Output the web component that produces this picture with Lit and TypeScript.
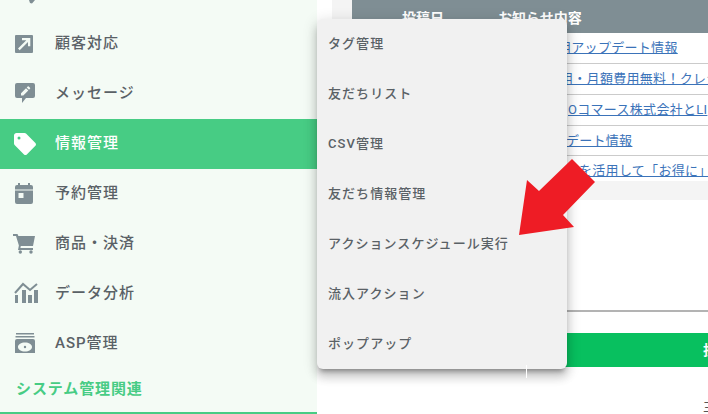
import { LitElement, html, css, svg } from "lit";
import { customElement } from "lit/decorators.js";

const icons: Record<string, unknown> = {
  bubble: svg`<path d="M10 10h12v8l-3 3.500-2-.5-1-3h-6z"/>`,
  open: svg`<path fill-rule="evenodd" d="M3 3h16a1 1 0 0 1 1 1v16a1 1 0 0 1-1 1H3a1 1 0 0 1-1-1V4a1 1 0 0 1 1-1zm6 3v2.300h4.300L5 16.500 6.700 18.200 15 10v4.300h2.300V6z"/>`,
  message: svg`<path fill-rule="evenodd" d="M4 1h16a2 2 0 0 1 2 2v11a2 2 0 0 1-2 2h-7l-4 5v-5H4a2 2 0 0 1-2-2V3a2 2 0 0 1 2-2zm4 12.500h2.300l5-5-2.300-2.300-5 5zm8-5.700 1-1a.7.7 0 0 0 0-1l-1.300-1.300a.7.7 0 0 0-1 0l-1 1z"/>`,
  tag: svg`<path fill-rule="evenodd" d="M3.500 1h8c.6 0 1.100.2 1.500.6l9.400 9.400c.8.8.8 2 0 2.800l-8.600 8.600c-.8.8-2 .8-2.800 0L1.600 13c-.4-.4-.6-.9-.6-1.500v-8C1 2.100 2.100 1 3.500 1zM6 4.500A1.500 1.500 0 1 0 6 7.500 1.500 1.500 0 0 0 6 4.500z"/>`,
  calendar: svg`<path fill-rule="evenodd" d="M5 1h2v2h8V1h2v2h1a2 2 0 0 1 2 2v15a2 2 0 0 1-2 2H4a2 2 0 0 1-2-2V5a2 2 0 0 1 2-2h1zM2 7.500v1h18v-1zM5.500 11v5h5v-5z"/>`,
  cart: svg`<path d="M0 2h4.500l.9 2H22l-2 10H7.800l-.4 2H20v2H5l.9-4.500L3 4H0z"/><circle cx="7.300" cy="20" r="1.700"/><circle cx="18" cy="20" r="1.700"/>`,
  chart: svg`<path d="M2 13h3v8H2zM9 8h4v13H9zM15 13h4v8h-4zM21 8h4v13h-4z"/><path d="M2 11 10 2l7 6 7-6" fill="none" stroke="#7f8e94" stroke-width="2"/>`,
  asp: svg`<path fill-rule="evenodd" d="M3 1h18v1.500H3zM2.500 4h19v1.500h-19zM4 7h16a2 2 0 0 1 2 2v12H2V9a2 2 0 0 1 2-2zm8 3.500c-3.900 0-7 2-7 4.500s3.100 4.500 7 4.500 7-2 7-4.500-3.100-4.500-7-4.500zm0 3.300a1.200 1.200 0 1 1 0 2.400 1.200 1.200 0 0 1 0-2.400z"/>`,
};

const navItems = [
  { icon: "bubble", label: "" },
  { icon: "open", label: "顧客対応" },
  { icon: "message", label: "メッセージ" },
  { icon: "tag", label: "情報管理", active: true },
  { icon: "calendar", label: "予約管理" },
  { icon: "cart", label: "商品・決済" },
  { icon: "chart", label: "データ分析" },
  { icon: "asp", label: "ASP管理" },
];

const menuItems = ["タグ管理", "友だちリスト", "CSV管理", "友だち情報管理", "アクションスケジュール実行", "流入アクション", "ポップアップ"];

const news = [
  { offset: 60, text: "用アップデート情報" },
  { offset: 62, text: "用・月額費用無料！クレジ" },
  { offset: 70, text: "Oコマース株式会社とLI" },
  { offset: 28, text: "アップデート情報" },
  { offset: 81, text: "を活用して「お得に」ショ" },
];

@customElement("app-root")
export class AppRoot extends LitElement {
  static styles = css`
    :host {
      display: block;
      position: relative;
      width: 708px;
      height: 414px;
      overflow: hidden;
      background: #fff;
      font-family: Roboto, "Noto Sans CJK JP", sans-serif;
    }
    .page { display: flex; height: 414px; }
    .sidebar {
      width: 317px;
      flex: none;
      height: 414px;
      background: #f4fbf5;
      display: flex;
      flex-direction: column;
      overflow: hidden;
    }
    .nav { margin-top: -31px; flex: none; }
    .item {
      height: 50px;
      display: flex;
      align-items: center;
      padding-left: 13px;
      gap: 18px;
      color: #5a6166;
      font-size: 15px;
      font-weight: 500;
      letter-spacing: 1px;
    }
    .item svg { width: 24px; height: 24px; fill: #7f8e94; flex: none; overflow: visible; }
    .item span { margin-bottom: 5px; }
    .item.active { background: #47cc84; color: #fff; }
    .item.active svg { fill: #fff; }
    .section {
      padding: 9px 0 0 16px;
      color: #47cc84;
      font-size: 15px;
      font-weight: 700;
      letter-spacing: 0.9px;
      line-height: 22px;
      flex: 1;
    }
    .rule { height: 2px; background: #47cc84; flex: none; }
    .main { flex: 1; min-width: 0; padding-left: 15px; overflow: hidden; }
    .panel {
      height: 200px;
      background: #f4f4f4;
      padding-left: 20px;
      box-sizing: border-box;
    }
    .head {
      height: 33px;
      background: #7f8e94;
      color: #fff;
      font-size: 14px;
      font-weight: 700;
      line-height: 36px;
      display: flex;
      white-space: nowrap;
      overflow: hidden;
    }
    .head .date { width: 146px; padding-left: 50px; box-sizing: border-box; }
    .news { background: #fff; height: 148px; overflow: hidden; }
    .row {
      height: 31px;
      box-sizing: border-box;
      border-bottom: 1px solid #cbcbcb;
      padding-left: 146px;
      white-space: nowrap;
      font-size: 13px;
      line-height: 29px;
      color: #3b73b9;
      overflow: hidden;
    }
    .row:nth-child(4) { height: 30px; }
    .row a { color: inherit; text-decoration: underline; display: inline-block; letter-spacing: 0.3px; }
    .divider { height: 2px; background: #b3b3b3; margin-top: 110px; }
    .button {
      margin-top: 21px;
      height: 34px;
      background: #08c05f;
      color: #fff;
      font-size: 14px;
      font-weight: 700;
      line-height: 34px;
      padding-left: 371px;
      white-space: nowrap;
      overflow: hidden;
    }
    .below {
      padding: 28px 0 0 371px;
      font-size: 14px;
      color: #555;
      white-space: nowrap;
      overflow: hidden;
    }
    .menu {
      position: absolute;
      left: 317px;
      top: 19px;
      width: 250px;
      background: #f1f1f1;
      border-radius: 6px;
      box-shadow: 0 5px 5px -3px rgba(0, 0, 0, 0.35), 0 8px 10px 1px rgba(0, 0, 0, 0.14), 0 3px 14px 2px rgba(0, 0, 0, 0.12);
    }
    .menu div {
      height: 50px;
      line-height: 50px;
      padding-left: 11px;
      color: #5a6166;
      font-size: 13px;
      font-weight: 500;
      letter-spacing: 1.05px;
      white-space: nowrap;
    }
    .tick { position: absolute; left: 526px; top: 365px; width: 1px; height: 13px; background: #fff; }
    .arrow { position: absolute; left: 510px; top: 150px; width: 95px; height: 95px; }
  `;

  render() {
    return html`
      <div class="page">
        <aside class="sidebar">
          <div class="nav">
            ${navItems.map(
              (n) => html`<div class="item ${n.active ? "active" : ""}">
                <svg viewBox="0 0 24 24">${icons[n.icon]}</svg>
                <span>${n.label}</span>
              </div>`
            )}
          </div>
          <div class="section">システム管理関連</div>
          <div class="rule"></div>
        </aside>
        <main class="main">
          <section class="panel">
            <div class="head"><div class="date">投稿日</div><div>お知らせ内容</div></div>
            <div class="news">
              ${news.map(
                (r) => html`<div class="row"><a href="#" style="margin-left:${r.offset}px">${r.text}</a></div>`
              )}
            </div>
          </section>
          <div class="divider"></div>
          <div class="button">投稿</div>
          <div class="below">主</div>
        </main>
      </div>
      <div class="menu">${menuItems.map((m) => html`<div>${m}</div>`)}</div>
      <div class="tick"></div>
      <svg class="arrow" viewBox="510 150 95 95">
        <polygon fill="#ee1c25" points="519,235 527,180 539,191 572,159 595,182 563,215 574,227" />
      </svg>
    `;
  }
}
